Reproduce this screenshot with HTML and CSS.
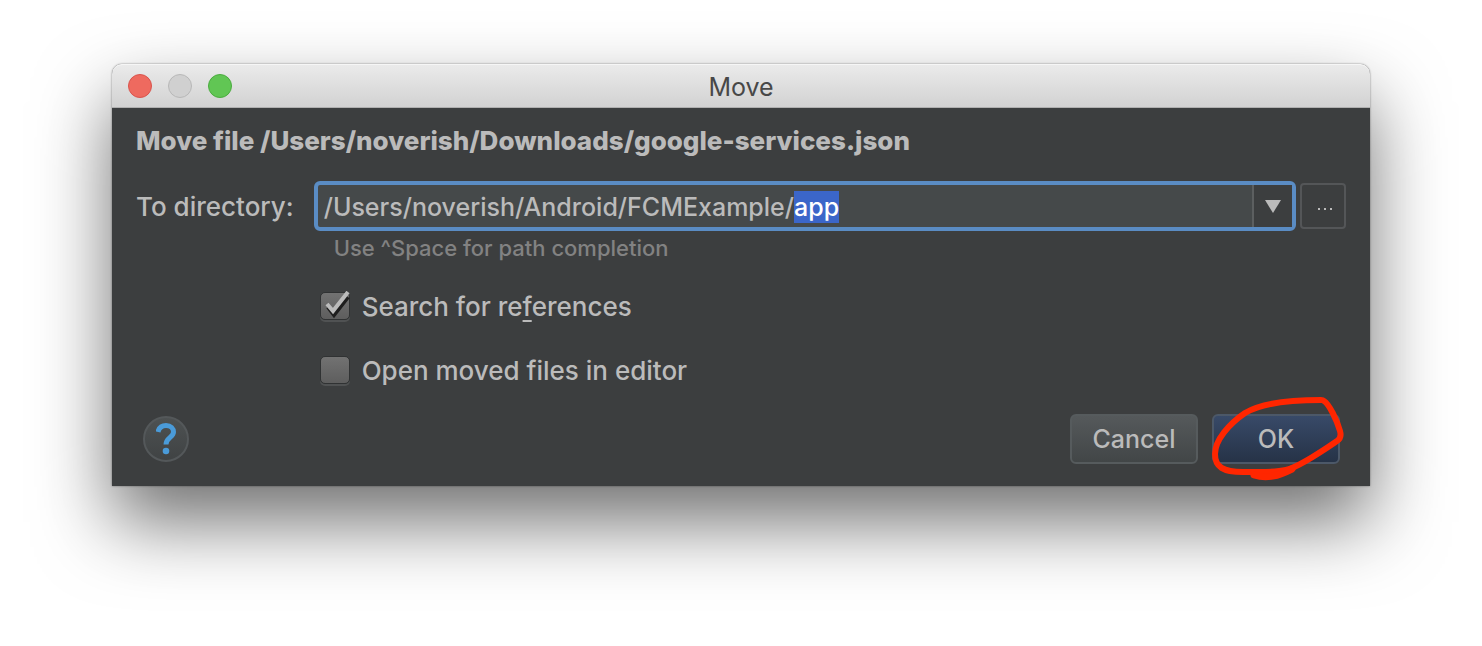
FILE: index.html
```html
<!DOCTYPE html>
<html lang="en">
<head>
<meta charset="utf-8">
<title>Move</title>
<link rel="stylesheet" href="styles.css">
</head>
<body>
<main class="dialog">
  <header class="titlebar">
    <div class="lights">
      <button class="light light-close" type="button" aria-label="Close"></button>
      <button class="light" type="button" aria-label="Minimize" disabled></button>
      <button class="light light-zoom" type="button" aria-label="Zoom"></button>
    </div>
    <h1 class="title">Move</h1>
  </header>
  <form class="content">
    <h2 class="heading">Move file /Users/noverish/Downloads/google-services.json</h2>
    <div class="fields">
      <label class="label" for="directory">To directory:</label>
      <div class="directory">
        <div class="combo">
          <input class="combo-input" id="directory" type="text" value="/Users/noverish/Android/FCMExample/app" spellcheck="false" autocomplete="off">
          <button class="combo-arrow" type="button" aria-label="Recent directories">
            <svg width="16" height="13" viewBox="0 0 16 13"><path d="M0 0H16L8 13Z" fill="#bbb"/></svg>
          </button>
        </div>
        <button class="browse" type="button" aria-label="Browse">
          <svg class="dots" width="16" height="2" viewBox="0 0 16 2" fill="#bbb"><path d="M1 0h2v2H1zM7 0h2v2H7zM13 0h2v2h-2z"/></svg>
        </button>
      </div>
      <p class="hint">Use ^Space for path completion</p>
      <div class="options">
        <div class="option">
          <span class="tick">
            <input class="box" id="references" type="checkbox" checked>
            <svg class="check" width="30" height="30" viewBox="0 0 30 30" fill="none"><path d="M8 16L14 24L28 6" stroke="#1e1e1e" stroke-width="4"/><path d="M7 13L13 20L28 1" stroke="#bbb" stroke-width="4"/></svg>
          </span>
          <label for="references">Search for re<span class="mnemonic">f</span>erences</label>
        </div>
        <div class="option">
          <span class="tick"><input class="box" id="open-files" type="checkbox"></span>
          <label for="open-files">Open moved files in editor</label>
        </div>
      </div>
    </div>
    <footer class="footer">
      <button class="help" type="button" aria-label="Help">
        <svg width="20" height="32" viewBox="0 0 20 32" fill="none"><path d="M2 9C3 4.500 6 2.500 10 2.500C15 2.500 17.500 5.500 17.500 9C17.500 14.500 10 14.500 10 21.500" stroke="#4a9bd9" stroke-width="5"/><circle cx="10" cy="28" r="3.300" fill="#4a9bd9"/></svg>
      </button>
      <div class="actions">
        <button class="button" type="button">Cancel</button>
        <div class="marked">
          <button class="button button-default" type="submit">OK</button>
          <svg class="scribble" width="134" height="86" viewBox="0 0 134 86" fill="none" stroke="#ff2600" stroke-linecap="round" stroke-linejoin="round"><path d="M109 4C74 4 48 8 33 17C17 28 3 44 3 58C3 71 11 76 31 76C47 76 62 77 74 74C87 71 109 56 125 45Q130 42 128 35C125 24 117 8 112 5Q111 4 109 4" stroke-width="6"/><path d="M42 79C55 83 66 80 80 73" stroke-width="7"/></svg>
        </div>
      </div>
    </footer>
  </form>
</main>
<script src="dialog.js"></script>
</body>
</html>
```

FILE: styles.css
```css
* { box-sizing: border-box; }

body {
  margin: 0;
  min-height: 100vh;
  padding: 64px 112px;
  background: #fff;
  color: #bbb;
  font: 450 26px/32px Inter, Roboto, sans-serif;
}

button, input { font: inherit; color: inherit; margin: 0; padding: 0; border: 0; outline: 0; }
button { display: flex; align-items: center; justify-content: center; }
svg { display: block; }
h1, h2, p { margin: 0; }

.dialog {
  background: #3c3e3f;
  border-radius: 10px 10px 0 0;
  box-shadow: 0 0 2px rgba(0, 0, 0, .5), 0 36px 74px rgba(0, 0, 0, .56);
}

.titlebar {
  display: grid;
  grid-template-columns: 1fr auto 1fr;
  align-items: center;
  height: 44px;
  padding: 0 16px;
  border-radius: 10px 10px 0 0;
  border-bottom: 1px solid #b0b0b0;
  background: linear-gradient(#ebebeb, #d2d2d2);
  box-shadow: inset 0 1px #f6f6f6;
}
.lights { display: flex; gap: 16px; }
.light { width: 24px; height: 24px; border: 1px solid #b8b8b8; border-radius: 50%; background: #d0d0d0; }
.light-close { border-color: #d9544d; background: #ee6a5f; }
.light-zoom { border-color: #4bac3f; background: #61c654; }
.title { padding-top: 2px; color: #484848; font-size: 25px; font-weight: 400; }

.content { padding: 16px 24px 22px; }
.heading { font-size: 26px; font-weight: 800; line-height: 34px; }

.fields { display: grid; grid-template-columns: auto 1fr; column-gap: 20px; align-items: center; margin-top: 23px; }
.label { padding-top: 2px; }
.directory { display: flex; align-items: center; gap: 4px; }
.combo {
  display: flex;
  flex: 1;
  height: 50px;
  border: 4px solid #5a8cc4;
  border-radius: 6px;
  background: #45494a;
}
.combo-input { flex: 1; min-width: 0; padding: 2px 0 0 6px; background: transparent; font-size: 25px; }
.combo-input::selection { background: #3b66c9; color: #fff; }
.combo-arrow { width: 40px; border-left: 2px solid #5c5f60; background: #3c3e3f; }
.browse { width: 46px; height: 46px; border: 2px solid #545658; border-radius: 4px; background: transparent; }
.dots { margin: 6px 0 0 4px; }
.hint { grid-column: 2; padding-left: 20px; color: #828282; font-size: 22px; line-height: 34px; }

.options { grid-column: 2; display: grid; gap: 32px; padding: 26px 0 0 6px; }
.option { display: flex; align-items: center; gap: 12px; }
.tick { position: relative; display: flex; padding-bottom: 2px; }
.box {
  appearance: none;
  width: 30px;
  height: 28px;
  border: 1px solid #303233;
  border-radius: 5px;
  background: linear-gradient(#727272, #5e5e5e);
  box-shadow: 0 2px #505253;
}
.check { position: absolute; left: 0; top: -1px; pointer-events: none; }
.mnemonic { text-decoration: underline; text-decoration-thickness: 2px; text-underline-offset: 4px; }

.footer { display: flex; align-items: center; justify-content: space-between; margin-top: 27px; padding: 0 6px 0 7px; }
.help { width: 46px; height: 46px; border: 2px solid #54585a; border-radius: 50%; background: linear-gradient(#4d5152, #404344); }
.actions { display: flex; gap: 14px; }
.button { width: 128px; height: 50px; border: 2px solid #565b5d; border-radius: 6px; background: linear-gradient(#55595b, #424647); font-size: 25px; }
.button-default { border-color: #4c5868; background: linear-gradient(#384a68, #263347); }
.marked { position: relative; }
.scribble { position: absolute; left: 0; top: -18px; pointer-events: none; }
```

FILE: dialog.js
```js
const directory = document.getElementById("directory");
directory.focus();
directory.setSelectionRange(directory.value.lastIndexOf("/") + 1, directory.value.length);
```
